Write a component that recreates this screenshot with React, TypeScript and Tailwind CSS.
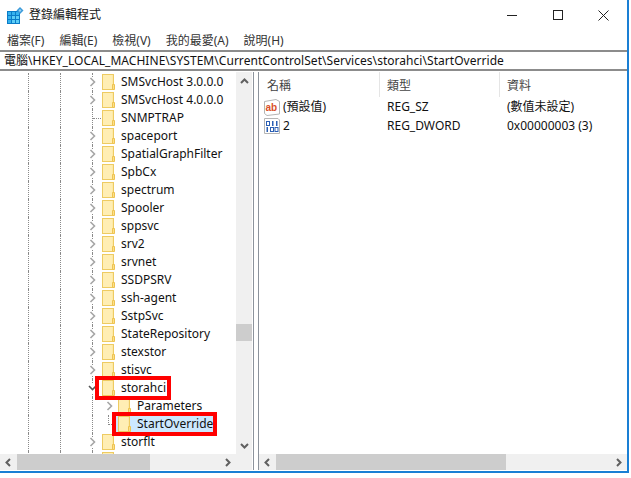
const font = '"Noto Sans", "Noto Sans CJK TC", sans-serif';

const rows = [
  { name: 'SMSvcHost 3.0.0.0', arrow: true },
  { name: 'SMSvcHost 4.0.0.0', arrow: true },
  { name: 'SNMPTRAP' },
  { name: 'spaceport', arrow: true },
  { name: 'SpatialGraphFilter', arrow: true },
  { name: 'SpbCx', arrow: true },
  { name: 'spectrum', arrow: true },
  { name: 'Spooler', arrow: true },
  { name: 'sppsvc', arrow: true },
  { name: 'srv2', arrow: true },
  { name: 'srvnet', arrow: true },
  { name: 'SSDPSRV', arrow: true },
  { name: 'ssh-agent', arrow: true },
  { name: 'SstpSvc', arrow: true },
  { name: 'StateRepository', arrow: true },
  { name: 'stexstor', arrow: true },
  { name: 'stisvc', arrow: true },
];

function Folder() {
  return (
    <svg width="13" height="16" viewBox="0 0 13 16" className="shrink-0">
      <rect x="0.5" y="0.5" width="11" height="15" fill="#fde9a6" stroke="#eecb62" />
      <rect x="1" y="1" width="9" height="14" fill="#ffeeb4" />
      <path d="M10.5 10.5h2v5h-2z" fill="#fbe08a" stroke="#eec350" />
    </svg>
  );
}

function Chevron({ open }: { open?: boolean }) {
  return (
    <svg width="9" height="10" viewBox="0 0 9 10" className="shrink-0 bg-white">
      {open ? (
        <path d="M1 3l3.5 3.5L8 3" fill="none" stroke="#555" strokeWidth="1.6" />
      ) : (
        <path d="M2.5 1L6.5 5L2.5 9" fill="none" stroke="#a6a6a6" strokeWidth="1.6" />
      )}
    </svg>
  );
}

// the three dotted guide lines left of the service rows
function Guides() {
  return (
    <>
      <div className="w-[28px] shrink-0" />
      <div className="w-[32px] h-full shrink-0 border-l border-dotted border-[#8a8a8a]" />
      <div className="w-[16px] h-full shrink-0 border-l border-dotted border-[#8a8a8a]" />
      <div className="w-[16px] shrink-0" />
    </>
  );
}

function ServiceRow({ name, arrow, open }: { name?: string; arrow?: boolean; open?: boolean }) {
  return (
    <div className="flex h-[18px] items-center shrink-0">
      <Guides />
      <div className="w-[10px] h-full shrink-0 flex items-center border-l border-dotted border-[#8a8a8a]">
        {arrow ? (
          <div className="-ml-[5px]">
            <Chevron open={open} />
          </div>
        ) : (
          <div className="w-[8px] border-t border-dotted border-[#8a8a8a]" />
        )}
      </div>
      <Folder />
      {name && <span className="ml-[6px] whitespace-nowrap">{name}</span>}
    </div>
  );
}

function ArrowButton({ dir }: { dir: 'up' | 'down' | 'left' | 'right' }) {
  const d = {
    up: 'M1 6L4.5 2.5L8 6',
    down: 'M1 3L4.5 6.5L8 3',
    left: 'M6 1L2.5 4.5L6 8',
    right: 'M3 1L6.5 4.5L3 8',
  }[dir];
  return (
    <svg width="9" height="9" viewBox="0 0 9 9">
      <path d={d} fill="none" stroke="#606060" strokeWidth="2" />
    </svg>
  );
}

function HScroll({ thumb, className }: { thumb: string; className: string }) {
  return (
    <div className={`flex h-[16px] bg-[#f0f0f0] items-center ${className}`}>
      <div className="w-[17px] h-full flex items-center justify-center shrink-0">
        <ArrowButton dir="left" />
      </div>
      <div className="flex-1 h-full">
        <div className={`h-full bg-[#cdcdcd] ${thumb}`} />
      </div>
      <div className="w-[17px] h-full flex items-center justify-center shrink-0">
        <ArrowButton dir="right" />
      </div>
    </div>
  );
}

export default function App() {
  return (
    <div
      className="relative w-[631px] h-[478px] bg-white overflow-hidden text-[12px] text-[#111]"
      style={{ fontFamily: font }}
    >
      <div className="w-[629px] h-[473px] flex flex-col border-r-2 border-b-2 border-[#1a7fd4]">
        {/* Title bar */}
        <div className="flex h-[30px] items-center shrink-0">
          <svg width="17" height="17" viewBox="0 0 17 17" className="ml-[7px] shrink-0">
            <rect x="0" y="4" width="13" height="13" fill="#0a7cc8" />
            <path d="M1 5h3v3H1zM5 5h3v3H5zM9 5h3v3H9zM1 9h3v3H1zM1 13h3v3H1z" fill="#35b2ee" />
            <path d="M5 9h3v3H5zM9 9h3v3H9zM5 13h3v3H5zM9 13h3v3H9z" fill="#5ccdf6" />
            <path d="M13 0l3.5 3.5L13 7L9.5 3.5z" fill="#3a9ad9" />
            <path d="M13 2l1.5 1.5L13 5l-1.5-1.5z" fill="#9bd4f5" />
          </svg>
          <span className="ml-[5px]">登錄編輯程式</span>
          <div className="ml-auto flex items-center">
            <div className="w-[10px] border-t border-[#222] mr-[36px]" />
            <div className="w-[10px] h-[10px] border border-[#222] mr-[35px]" />
            <svg width="11" height="11" viewBox="0 0 11 11" className="mr-[18px]">
              <path d="M0.5 0.5L10.5 10.5M10.5 0.5L0.5 10.5" stroke="#222" />
            </svg>
          </div>
        </div>

        {/* Menu */}
        <div className="flex h-[20px] items-center shrink-0 pl-[7px] pt-[1px] gap-[15px] text-[#333]">
          <span>檔案(F)</span>
          <span>編輯(E)</span>
          <span>檢視(V)</span>
          <span>我的最愛(A)</span>
          <span>說明(H)</span>
        </div>

        {/* Address bar */}
        <div className="flex h-[21px] items-center shrink-0 pl-[4px] pt-[1px] border-y-2 border-[#8c8c8c] whitespace-nowrap tracking-[0.04px]">
          電腦\HKEY_LOCAL_MACHINE\SYSTEM\CurrentControlSet\Services\storahci\StartOverride
        </div>

        {/* Panes */}
        <div className="flex flex-1 min-h-0 pt-[1px] pb-[1px]">
          {/* Tree */}
          <div className="w-[253px] h-full flex flex-col shrink-0">
            <div className="flex flex-1 min-h-0">
              <div className="flex-1 min-w-0 overflow-hidden flex flex-col pt-[1px]">
                {rows.map((r) => (
                  <ServiceRow key={r.name} name={r.name} arrow={r.arrow} />
                ))}
                <ServiceRow name="storahci" arrow open />
                <div className="flex h-[18px] items-center shrink-0">
                  <Guides />
                  <div className="w-[26px] h-full shrink-0 border-l border-dotted border-[#8a8a8a] flex items-center pl-[12px]">
                    <Chevron />
                  </div>
                  <Folder />
                  <span className="ml-[6px]">Parameters</span>
                </div>
                <div className="flex h-[18px] items-center shrink-0">
                  <Guides />
                  <div className="w-[23px] h-full shrink-0 border-l border-dotted border-[#8a8a8a] flex items-center pl-[15px]">
                    <div className="w-[6px] h-[10px] -mt-[9px] border-l border-b border-dotted border-[#8a8a8a]" />
                  </div>
                  <div className="w-[99px] h-full bg-[#cce8ff] flex items-center pl-[3px]">
                    <Folder />
                    <span className="ml-[6px]">StartOverride</span>
                  </div>
                </div>
                <ServiceRow name="storflt" arrow />
                <ServiceRow arrow />
              </div>
              {/* Vertical scrollbar */}
              <div className="w-[16px] h-full bg-[#f0f0f0] flex flex-col shrink-0 mr-[1px]">
                <div className="h-[18px] flex items-center justify-center shrink-0">
                  <ArrowButton dir="up" />
                </div>
                <div className="flex-1 pt-[234px]">
                  <div className="h-[17px] bg-[#cdcdcd]" />
                </div>
                <div className="h-[18px] flex items-center justify-center shrink-0">
                  <ArrowButton dir="down" />
                </div>
              </div>
            </div>
            <HScroll thumb="w-[133px]" className="w-[252px] pr-[16px] shrink-0" />
          </div>

          {/* Splitter */}
          <div className="w-[6px] h-full shrink-0 border-x border-[#8c939c]" />

          {/* List */}
          <div className="flex-1 min-w-0 h-full flex flex-col">
            <div className="flex-1 min-h-0">
              <div className="flex h-[25px] items-center text-[#444]">
                <div className="w-[121px] h-full pl-[8px] pt-[2px] flex items-center border-r border-[#e5e5e5]">名稱</div>
                <div className="w-[120px] h-full pl-[7px] pt-[2px] flex items-center border-r border-[#e5e5e5]">類型</div>
                <div className="pl-[7px] pt-[2px]">資料</div>
              </div>
              <div className="flex h-[19px] items-center pt-[1px]">
                <div className="w-[121px] flex items-center pl-[5px]">
                  <svg width="16" height="17" viewBox="0 0 16 17" className="shrink-0">
                    <path d="M0.5 2.5L12 0.5L15.5 2.5V15L3 16.5L0.5 14.5Z" fill="#fff" stroke="#b5b5b5" />
                    <text x="1.5" y="11.5" fontSize="10" fontWeight="700" fill="#d9502a" fontFamily="Liberation Sans, sans-serif">ab</text>
                  </svg>
                  <span className="ml-[3px]">(預設值)</span>
                </div>
                <div className="w-[120px] pl-[7px]">REG_SZ</div>
                <div className="pl-[7px]">(數值未設定)</div>
              </div>
              <div className="flex h-[19px] items-center pt-[1px]">
                <div className="w-[121px] flex items-center pl-[5px]">
                  <svg width="16" height="16" viewBox="0 0 16 16" className="shrink-0">
                    <path d="M0.5 0.5H14L15.5 2V15.5H0.5Z" fill="#fff" stroke="#b5b5b5" />
                    <rect x="2.5" y="3.5" width="3" height="4" fill="none" stroke="#2b5fb4" />
                    <path d="M8 3h1.5v5H8zM12 3h1.5v5H12zM2.5 9h1.5v5H2.5z" fill="#2b5fb4" />
                    <rect x="6.5" y="9.5" width="3" height="4" fill="none" stroke="#2b5fb4" />
                    <rect x="11" y="9.5" width="3" height="4" fill="none" stroke="#2b5fb4" />
                  </svg>
                  <span className="ml-[3px]">2</span>
                </div>
                <div className="w-[120px] pl-[7px]">REG_DWORD</div>
                <div className="pl-[7px]">0x00000003 (3)</div>
              </div>
            </div>
            <HScroll thumb="w-[230px]" className="w-[368px] shrink-0" />
          </div>
        </div>
      </div>

      {/* Red annotation boxes */}
      <div className="absolute left-[95px] top-[376px] w-[76px] h-[24px] border-[4px] border-[#ff0000]" />
      <div className="absolute left-[112px] top-[412px] w-[105px] h-[24px] border-[4px] border-[#ff0000]" />
    </div>
  );
}
